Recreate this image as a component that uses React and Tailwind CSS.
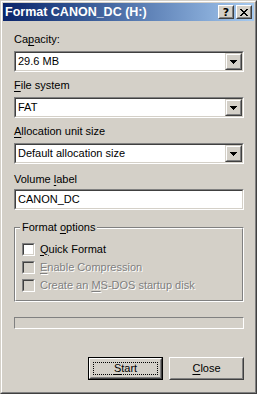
import React from 'react';

// classic 3D edges
const raisedOuter = 'border border-t-[#d4d0c8] border-l-[#d4d0c8] border-b-[#404040] border-r-[#404040]';
const raisedInner = 'border border-t-white border-l-white border-b-[#808080] border-r-[#808080]';
const btnOuter = 'border border-t-white border-l-white border-b-[#404040] border-r-[#404040]';
const btnInner = 'border border-t-[#d4d0c8] border-l-[#d4d0c8] border-b-[#808080] border-r-[#808080]';
const sunkOuter = 'border border-t-[#808080] border-l-[#808080] border-b-white border-r-white';
const sunkInner = 'border border-t-[#404040] border-l-[#404040] border-b-[#d4d0c8] border-r-[#d4d0c8]';

function Key({ children }) {
    return <span className="underline underline-offset-[2px]">{children}</span>;
}

function DownArrow() {
    return (
        <svg width="7" height="4" viewBox="0 0 7 4" shapeRendering="crispEdges">
            <rect x="0" y="0" width="7" height="1" fill="#000" />
            <rect x="1" y="1" width="5" height="1" fill="#000" />
            <rect x="2" y="2" width="3" height="1" fill="#000" />
            <rect x="3" y="3" width="1" height="1" fill="#000" />
        </svg>
    );
}

function CloseGlyph() {
    const rows = [[0, 2, 6, 2], [1, 2, 5, 2], [2, 4], [3, 2], [2, 4], [1, 2, 5, 2], [0, 2, 6, 2]];
    return (
        <svg width="8" height="7" viewBox="0 0 8 7" shapeRendering="crispEdges">
            {rows.map((r, y) => (
                <g key={y}>
                    <rect x={r[0]} y={y} width={r[1]} height="1" fill="#000" />
                    {r.length > 2 && <rect x={r[2]} y={y} width={r[3]} height="1" fill="#000" />}
                </g>
            ))}
        </svg>
    );
}

function TitleButton({ children }) {
    return (
        <div className={`w-[16px] h-[14px] bg-[#d4d0c8] ${btnOuter}`}>
            <div className={`w-full h-full flex items-center justify-center ${btnInner}`}>{children}</div>
        </div>
    );
}

function ComboBox({ value }) {
    return (
        <div className={`h-[21px] ${sunkOuter}`}>
            <div className={`h-full bg-white flex ${sunkInner}`}>
                <div className="flex-1 pl-[2px] flex items-center">{value}</div>
                <div className={`w-[17px] h-full bg-[#d4d0c8] ${raisedOuter}`}>
                    <div className={`w-full h-full flex items-center justify-center ${raisedInner}`}>
                        <DownArrow />
                    </div>
                </div>
            </div>
        </div>
    );
}

function CheckBox({ label, disabled }) {
    return (
        <div className="flex items-center h-[18px]">
            <div className={`w-[13px] h-[13px] ${sunkOuter}`}>
                <div className={`w-full h-full ${sunkInner} ${disabled ? 'bg-[#d4d0c8]' : 'bg-white'}`} />
            </div>
            <span className={`ml-[5px] ${disabled ? 'text-[#808080] [text-shadow:1px_1px_0_#fff]' : ''}`}>{label}</span>
        </div>
    );
}

export default function App() {
    return (
        <div className="w-[257px] h-[394px] bg-[#d4d0c8] text-black text-[11px] leading-[13px] font-['Liberation_Sans',Arial,sans-serif]">
            <div className={`h-full ${raisedOuter}`}>
                <div className={`h-full p-[1px] flex flex-col ${raisedInner}`}>
                    {/* title bar */}
                    <div className="h-[18px] flex items-center pl-[2px] pr-[2px] bg-linear-to-r from-[#0a246a] to-[#a6caf0]">
                        <span className="flex-1 text-white font-bold text-[12.5px] leading-[14px]">Format CANON_DC (H:)</span>
                        <TitleButton>
                            <span className="font-bold text-[11px] leading-[11px] font-['DejaVu_Sans',sans-serif]">?</span>
                        </TitleButton>
                        <div className="ml-[2px]">
                            <TitleButton>
                                <CloseGlyph />
                            </TitleButton>
                        </div>
                    </div>

                    {/* body */}
                    <div className="flex-1 flex flex-col pl-[11px] pr-[10px] pt-[12px]">
                        <div>Ca<Key>p</Key>acity:</div>
                        <div className="mt-[5px]"><ComboBox value="29.6 MB" /></div>

                        <div className="mt-[7px]"><Key>F</Key>ile system</div>
                        <div className="mt-[5px]"><ComboBox value="FAT" /></div>

                        <div className="mt-[7px]"><Key>A</Key>llocation unit size</div>
                        <div className="mt-[5px]"><ComboBox value="Default allocation size" /></div>

                        <div className="mt-[9px]">Volume <Key>l</Key>abel</div>
                        <div className={`mt-[3px] h-[21px] ${sunkOuter}`}>
                            <div className={`h-full bg-white flex items-center pl-[2px] ${sunkInner}`}>CANON_DC</div>
                        </div>

                        {/* group box */}
                        <div className={`relative mt-[17px] h-[75px] ${sunkOuter}`}>
                            <div className={`h-full pl-[6px] pt-[11px] ${raisedInner}`}>
                                <CheckBox label={<><Key>Q</Key>uick Format</>} />
                                <CheckBox label={<><Key>E</Key>nable Compression</>} disabled />
                                <CheckBox label={<>Create an <Key>M</Key>S-DOS startup disk</>} disabled />
                            </div>
                            <div className="absolute left-[5px] top-[-7px] px-[2px] bg-[#d4d0c8]">Format <Key>o</Key>ptions</div>
                        </div>

                        {/* progress */}
                        <div className={`mt-[15px] h-[12px] ${sunkOuter}`} />

                        {/* buttons */}
                        <div className="mt-[28px] flex justify-end gap-[6px]">
                            <div className="w-[75px] h-[23px] border border-black">
                                <div className={`w-full h-full bg-[#d4d0c8] ${btnOuter}`}>
                                    <div className={`w-full h-full p-[2px] ${btnInner}`}>
                                        <div className="w-full h-full border border-dotted border-black flex items-center justify-center">
                                            <Key>S</Key>tart
                                        </div>
                                    </div>
                                </div>
                            </div>
                            <div className={`w-[75px] h-[23px] bg-[#d4d0c8] ${btnOuter}`}>
                                <div className={`w-full h-full flex items-center justify-center ${btnInner}`}>
                                    <Key>C</Key>lose
                                </div>
                            </div>
                        </div>
                    </div>
                </div>
            </div>
        </div>
    );
}
